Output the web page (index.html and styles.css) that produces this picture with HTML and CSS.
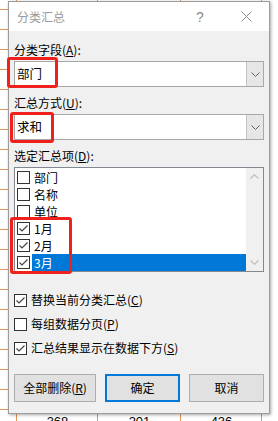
FILE: index.html
```html
<!DOCTYPE html>
<html lang="zh-CN">
<head>
<meta charset="utf-8">
<title>分类汇总</title>
<link rel="stylesheet" href="styles.css">
</head>
<body>
<div class="sheet">
  <div class="sheet-row">
    <span class="rowhead"></span>
    <span class="cell">368</span>
    <span class="cell wide">201</span>
    <span class="cell">436</span>
  </div>
</div>

<div class="dialog">
  <div class="titlebar">
    <span class="title">分类汇总</span>
    <span class="tb-btn help">?</span>
    <span class="tb-btn close">
      <svg width="11" height="11" viewBox="0 0 11 11"><path d="M0.5 0.5 L10.5 10.5 M10.5 0.5 L0.5 10.5" stroke="#8a8a8a" stroke-width="1" fill="none"/></svg>
    </span>
  </div>

  <div class="content">
    <div class="field-label">分类字段(<u>A</u>):</div>
    <div class="combo">
      <span class="combo-value">部门</span>
      <span class="combo-btn"><svg width="9" height="5" viewBox="0 0 9 5"><path d="M0.5 0.5 L4.5 4.5 L8.5 0.5" stroke="#606060" stroke-width="1" fill="none"/></svg></span>
    </div>

    <div class="field-label">汇总方式(<u>U</u>):</div>
    <div class="combo">
      <span class="combo-value">求和</span>
      <span class="combo-btn"><svg width="9" height="5" viewBox="0 0 9 5"><path d="M0.5 0.5 L4.5 4.5 L8.5 0.5" stroke="#606060" stroke-width="1" fill="none"/></svg></span>
    </div>

    <div class="field-label">选定汇总项(<u>D</u>):</div>
    <div class="listbox">
      <ul class="items">
        <li class="item"><span class="cb"></span><span class="item-text">部门</span></li>
        <li class="item"><span class="cb"></span><span class="item-text">名称</span></li>
        <li class="item"><span class="cb"></span><span class="item-text">单位</span></li>
        <li class="item"><span class="cb"><svg width="11" height="11" viewBox="0 0 11 11"><path d="M1.5 5.5 L4 8 L9.5 2.5" stroke="#444" stroke-width="1.2" fill="none"/></svg></span><span class="item-text">1月</span></li>
        <li class="item"><span class="cb"><svg width="11" height="11" viewBox="0 0 11 11"><path d="M1.5 5.5 L4 8 L9.5 2.5" stroke="#444" stroke-width="1.2" fill="none"/></svg></span><span class="item-text">2月</span></li>
        <li class="item selected"><span class="cb"><svg width="11" height="11" viewBox="0 0 11 11"><path d="M1.5 5.5 L4 8 L9.5 2.5" stroke="#444" stroke-width="1.2" fill="none"/></svg></span><span class="item-text">3月</span></li>
      </ul>
      <div class="scrollbar">
        <span class="sb-arrow"><svg width="9" height="5" viewBox="0 0 9 5"><path d="M0.5 4.5 L4.5 0.8 L8.5 4.5" stroke="#c2c2c2" stroke-width="1.4" fill="none"/></svg></span>
        <span class="sb-arrow"><svg width="9" height="5" viewBox="0 0 9 5"><path d="M0.5 0.5 L4.5 4.2 L8.5 0.5" stroke="#c2c2c2" stroke-width="1.4" fill="none"/></svg></span>
      </div>
    </div>

    <div class="options">
      <div class="opt"><span class="cb"><svg width="11" height="11" viewBox="0 0 11 11"><path d="M1.5 5.5 L4 8 L9.5 2.5" stroke="#444" stroke-width="1.2" fill="none"/></svg></span><span>替换当前分类汇总(<u>C</u>)</span></div>
      <div class="opt"><span class="cb"></span><span>每组数据分页(<u>P</u>)</span></div>
      <div class="opt"><span class="cb"><svg width="11" height="11" viewBox="0 0 11 11"><path d="M1.5 5.5 L4 8 L9.5 2.5" stroke="#444" stroke-width="1.2" fill="none"/></svg></span><span>汇总结果显示在数据下方(<u>S</u>)</span></div>
    </div>

    <div class="buttons">
      <button class="btn btn-wide">全部删除(<u>R</u>)</button>
      <button class="btn btn-default">确定</button>
      <button class="btn">取消</button>
    </div>
  </div>
</div>

<div class="mark mark-field"></div>
<div class="mark mark-method"></div>
<div class="mark mark-months"></div>
</body>
</html>
```

FILE: styles.css
```css
* { box-sizing: border-box; }

html, body {
  margin: 0;
  padding: 0;
}

body {
  position: relative;
  width: 278px;
  height: 421px;
  overflow: hidden;
  font-family: "Noto Sans CJK SC", "Microsoft YaHei", sans-serif;
  font-size: 12px;
  color: #000;
  background-color: #fff;
  background-image:
    linear-gradient(to right,
      transparent 0 16px, #e3955a 16px 17px,
      transparent 17px 97px, #e3955a 97px 98px,
      transparent 98px 180px, #e3955a 180px 181px,
      transparent 181px 261px, #e3955a 261px 262px,
      transparent 262px),
    repeating-linear-gradient(to bottom,
      transparent 0 9px, #e3955a 9px 10px, transparent 10px 20px);
  background-size: 100% 100%, 16px 100%;
  background-repeat: no-repeat, no-repeat;
}

/* spreadsheet behind the dialog */
.sheet {
  display: flex;
  flex-direction: column;
}

.sheet-row {
  display: flex;
  margin-top: 412px;
  height: 20px;
  font-family: "Liberation Sans", Arial, sans-serif;
  font-size: 13px;
  line-height: 20px;
}

.rowhead { width: 17px; }
.cell { width: 81px; text-align: center; }
.cell.wide { width: 83px; }

/* dialog */
.dialog {
  position: absolute;
  left: 8px;
  top: 1px;
  width: 262px;
  height: 413px;
  border: 1px solid #9c9c9c;
  background: #f0f0f0;
  box-shadow: 1px 1px 3px rgba(0, 0, 0, 0.35);
  display: flex;
  flex-direction: column;
}

.titlebar {
  height: 29px;
  background: #fff;
  display: flex;
  align-items: center;
  padding-left: 8px;
  flex-shrink: 0;
}

.title {
  color: #9a9a9a;
  font-size: 12px;
  line-height: 16px;
  flex: 1;
}

.tb-btn {
  width: 46px;
  height: 29px;
  display: flex;
  align-items: center;
  justify-content: center;
  color: #8a8a8a;
}

.help {
  font-family: "Liberation Sans", Arial, sans-serif;
  font-size: 14px;
}

.content {
  flex: 1;
  padding: 11px 5px 0 5px;
  display: flex;
  flex-direction: column;
}

.field-label {
  line-height: 16px;
  height: 16px;
}

.combo {
  margin-top: 3px;
  margin-bottom: 8px;
  height: 26px;
  border: 1px solid #a8a8a8;
  background: #fff;
  display: flex;
}

.combo-value {
  flex: 1;
  padding-left: 2px;
  line-height: 24px;
  font-size: 12.5px;
}

.combo-btn {
  width: 17px;
  background: #e6e6e6;
  border-left: 1px solid #c4c4c4;
  display: flex;
  align-items: center;
  justify-content: center;
}

.listbox {
  margin-top: 3px;
  height: 105px;
  border: 1px solid #828790;
  background: #fff;
  display: flex;
}

.items {
  list-style: none;
  margin: 0;
  padding: 1px 0 0 2px;
  flex: 1;
  display: flex;
  flex-direction: column;
}

.item {
  height: 17px;
  display: flex;
  align-items: center;
  gap: 2px;
}

.item-text {
  flex: 1;
  height: 17px;
  line-height: 17px;
  padding-left: 2px;
}

.item.selected .item-text {
  background: #0078d7;
  color: #fff;
}

.cb {
  width: 13px;
  height: 13px;
  border: 1px solid #333;
  background: #fff;
  display: flex;
  align-items: center;
  justify-content: center;
  flex-shrink: 0;
}

.scrollbar {
  width: 17px;
  background: #f0f0f0;
  display: flex;
  flex-direction: column;
  justify-content: space-between;
}

.sb-arrow {
  height: 17px;
  display: flex;
  align-items: center;
  justify-content: center;
}

.options {
  margin-top: 16px;
  display: flex;
  flex-direction: column;
}

.opt {
  height: 24px;
  display: flex;
  align-items: center;
  gap: 4px;
  line-height: 16px;
}

.buttons {
  margin-top: 14px;
  display: flex;
  gap: 9px;
}

.btn {
  width: 75px;
  height: 28px;
  background: #e1e1e1;
  border: 1px solid #adadad;
  font-family: "Noto Sans CJK SC", "Microsoft YaHei", sans-serif;
  font-size: 12px;
  color: #000;
  padding: 0;
  line-height: 16px;
}

.btn-wide { width: 82px; }

.btn-default {
  border: 2px solid #0078d7;
}

/* red annotation boxes drawn over the screenshot */
.mark {
  position: absolute;
  border: 3px solid #f0201c;
  border-radius: 3px;
}

.mark-field  { left: 7px;  top: 57px;  width: 51px; height: 31px; }
.mark-method { left: 10px; top: 112px; width: 44px; height: 31px; }
.mark-months { left: 10px; top: 217px; width: 62px; height: 57px; }
```
